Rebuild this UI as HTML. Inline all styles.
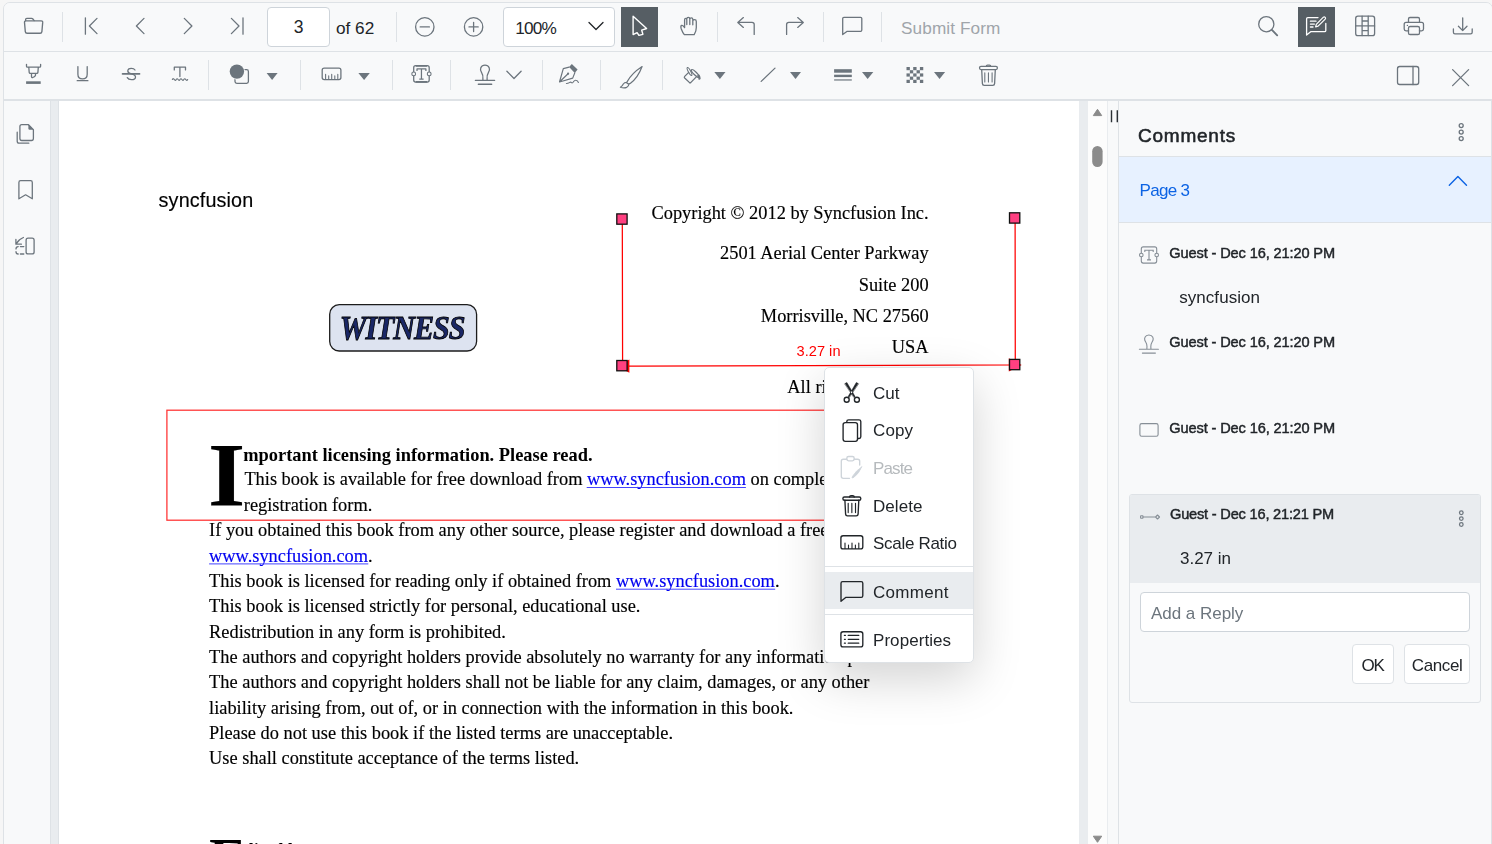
<!DOCTYPE html>
<html>
<head>
<meta charset="utf-8">
<title>PDF Viewer</title>
<style>
html,body{margin:0;padding:0;background:#f6f6f6;}
body{width:1492px;height:844px;overflow:hidden;position:relative;font-family:"Liberation Sans",sans-serif;color:#212529;}
*{box-sizing:border-box;}
.abs{position:absolute;}
#frame{position:absolute;left:3px;top:2px;width:1490px;height:860px;border:1px solid #dee2e6;border-radius:7px;background:#f8f9fa;overflow:hidden;}
/* coordinates inside #frame are offset by (4,3) from page: use #pg wrapper to keep page coords */
#pg{position:absolute;left:-4px;top:-3px;width:1492px;height:844px;}
.tb1{position:absolute;left:0;top:0;width:1500px;height:52px;background:#f8f9fa;border-bottom:1px solid #dee2e6;}
.tb2{position:absolute;left:0;top:52px;width:1500px;height:48px;background:#f8f9fa;}
.tbline{position:absolute;left:0;top:99px;width:1500px;height:2px;background:#dee2e6;}
.sep{position:absolute;width:1px;background:#dee2e6;}
.ic{position:absolute;overflow:visible;}
.ic *{vector-effect:none;}
.s{fill:none;stroke:#6c757d;stroke-width:1.3;stroke-linecap:round;stroke-linejoin:round;}
.f{fill:#6c757d;stroke:none;}
.t17{font-size:17.2px;line-height:20px;white-space:nowrap;}
.box{position:absolute;background:#fff;border:1px solid #ced4da;border-radius:4px;}
.active{position:absolute;background:#565e64;}
/* main */
#side{position:absolute;left:4px;top:101px;width:47px;height:760px;background:#f8f9fa;border-right:1px solid #dee2e6;}
#view{position:absolute;left:51px;top:101px;width:1037px;height:760px;background:#e9ecef;}
#page{position:absolute;left:58px;top:101px;width:1021px;height:760px;background:#fff;border-left:1px solid #dee2e6;}
#vscroll{position:absolute;left:1088px;top:101px;width:19px;height:760px;background:#fcfcfc;}
#split{position:absolute;left:1107px;top:101px;width:12px;height:760px;background:#f8f9fa;border-left:1px solid #e9ecef;border-right:1px solid #dee2e6;}
#cpanel{position:absolute;left:1119px;top:101px;width:373px;height:760px;background:#f8f9fa;border-right:1px solid #dee2e6;}
.serif{font-family:"Liberation Serif",serif;color:#000;white-space:nowrap;position:absolute;}
/* context menu */
#menu{position:absolute;left:824px;top:367px;width:150px;height:296px;background:#fff;border:1px solid #dee2e6;border-radius:5px;box-shadow:0 16px 48px rgba(0,0,0,.175);}
.ms{fill:none;stroke:#212529;stroke-width:1.3;stroke-linecap:round;stroke-linejoin:round;}
</style>
</head>
<body>
<div id="frame"><div id="pg">

<!-- ===== TOOLBAR 1 ===== -->
<div class="tb1"></div>
<div class="tb2"></div>
<div class="tbline"></div>
<div class="sep" style="left:62px;top:12px;height:30px"></div>
<div class="sep" style="left:396px;top:12px;height:30px"></div>
<div class="sep" style="left:717px;top:12px;height:30px"></div>
<div class="sep" style="left:823px;top:12px;height:30px"></div>
<div class="sep" style="left:881px;top:12px;height:30px"></div>
<div class="box" style="left:267px;top:7px;width:63px;height:40px"></div>
<div class="abs t17" id="pgnum" style="left:267px;top:17.3px;width:63px;text-align:center;font-size:17.5px">3</div>
<div class="abs t17" id="of62" style="left:336px;top:17.7px;">of 62</div>
<div class="box" style="left:503px;top:7px;width:112px;height:40px"></div>
<div class="abs t17" id="z100" style="left:515.2px;top:17.7px;letter-spacing:-0.75px;">100%</div>
<div class="active" style="left:621px;top:7px;width:37px;height:40px"></div>
<div class="active" style="left:1298px;top:7px;width:37px;height:40px"></div>
<div class="abs t17" id="submit" style="left:901px;top:18px;letter-spacing:0.1px;color:#a0a5aa">Submit Form</div>
<svg class="ic" style="left:0;top:0" width="1492" height="101" viewBox="0 0 1492 101">
<!-- folder -->
<path class="s" d="M25.6 20.6 V19.6 Q25.6 18.4 26.8 18.4 H31.6 Q32.4 18.4 32.9 19 L34.2 20.6"/>
<path class="s" style="stroke-width:1.35" d="M26 20.8 H41.2 Q42.8 20.8 42.7 22.4 L41.9 31.6 Q41.7 33.2 40.1 33.2 H27.1 Q25.5 33.2 25.3 31.6 L24.5 22.4 Q24.4 20.8 26 20.8 Z"/>
<!-- first -->
<path class="s" d="M85.4 17.8 V34.2 M97 18.4 L89.4 26 L97 33.6"/>
<!-- prev -->
<path class="s" d="M144 18.4 L136.4 26 L144 33.6"/>
<!-- next -->
<path class="s" d="M184.3 18.4 L191.9 26 L184.3 33.6"/>
<!-- last -->
<path class="s" d="M231.4 18.4 L239 26 L231.4 33.6 M243 17.8 V34.2"/>
<!-- zoom out -->
<circle class="s" cx="424.8" cy="26.9" r="9.2"/><path class="s" d="M420.2 26.9 H429.4"/>
<!-- zoom in -->
<circle class="s" cx="473.6" cy="26.9" r="9.2"/><path class="s" d="M469 26.9 H478.2 M473.6 22.3 V31.5"/>
<!-- zoom chevron -->
<path class="s" style="stroke:#212529" d="M589 22.5 L596 29.5 L603 22.5"/>
<!-- cursor -->
<path class="s" style="stroke:#fff;stroke-width:1.4;stroke-linejoin:round" d="M633.1 16.2 V34.6 L637.1 32.6 L638.9 35.4 L642.9 34.3 L641.7 30.2 L646.6 28.5 Z"/>
<!-- hand -->
<path class="s" d="M684.6 27.6 V19.8 Q684.6 18.4 685.7 18.4 Q686.8 18.4 686.8 19.8 V24.5 M686.8 19 Q686.8 17.3 688.3 17.3 Q689.8 17.3 689.8 19 V24.5 M689.8 19.3 Q689.8 17.8 691.3 17.8 Q692.8 17.8 692.8 19.3 V24.8 M692.8 21 Q692.8 19.6 694.5 19.6 Q696.3 19.6 696.3 21.4 V27.5 Q696.3 31.5 694.2 34.6 H684.3 Q682.6 32.6 681.3 29 Q680.3 26 681.6 25.4 Q683 24.9 684.6 27.6"/>
<!-- undo -->
<path class="s" d="M743.4 17.6 L737.8 22.4 L743.4 27.4 M737.8 22.4 H752 Q754.2 22.4 754.2 24.6 V34.4"/>
<!-- redo -->
<path class="s" d="M797.7 17.6 L803.3 22.4 L797.7 27.4 M803.3 22.4 H788.8 Q786.6 22.4 786.6 24.6 V34.4"/>
<!-- comment -->
<path class="s" d="M842.7 34.6 V18.6 Q842.7 17.4 843.9 17.4 H860.6 Q861.8 17.4 861.8 18.6 V30.1 Q861.8 31.3 860.6 31.3 H847.2 Z"/>
<!-- search -->
<circle class="s" cx="1266.3" cy="24.2" r="7.6"/><path class="s" style="stroke-width:1.9" d="M1271.9 29.9 L1277.2 35.3"/>
<!-- annot edit (white) -->
<g style="stroke:#fff" class="s"><path d="M1325.8 23.5 V30.4 Q1325.8 31.6 1324.6 31.6 H1311 L1306.6 35 V18.8 Q1306.6 17.6 1307.8 17.6 H1318"/>
<path d="M1310.4 21.2 H1316 M1310.4 24.1 H1314.4 M1310.4 27 H1313"/>
<path style="stroke-width:1.2" d="M1315.6 26.9 L1316.3 24.3 L1323.4 17.2 Q1324.3 16.4 1325.2 17.3 Q1326 18.2 1325.2 19.1 L1318.1 26.2 Z"/></g>
<!-- form designer grid -->
<rect class="s" x="1355.7" y="16.2" width="18.9" height="19.4" rx="2.2"/>
<path class="s" d="M1362.1 16.2 V35.6 M1368.2 16.2 V35.6 M1355.7 25.9 H1374.6 M1362.1 21 H1368.2 M1362.1 30.7 H1368.2"/>
<!-- print -->
<path class="s" d="M1408.5 22.4 V19 Q1408.5 17.5 1410 17.5 H1418 Q1419.5 17.5 1419.500 19 V22.4"/>
<path class="s" d="M1408.5 30.8 H1406 Q1404.200 30.8 1404.2 29 V24.3 Q1404.2 22.4 1406.100 22.4 H1421.7 Q1423.5 22.4 1423.5 24.3 V29 Q1423.5 30.8 1421.7 30.8 H1419.5"/>
<rect class="s" x="1408.5" y="26.5" width="11" height="8" rx="1.6"/>
<circle class="f" cx="1407.4" cy="25.4" r="0.7"/>
<!-- download -->
<path class="s" d="M1462.7 17.8 V30.6 M1458.400 26.300 L1462.7 30.6 L1467 26.300 M1453.4 28.900 V32.200 Q1453.4 33.800 1455 33.800 H1470.6 Q1472.200 33.800 1472.200 32.200 V28.900"/>
</svg>

<div class="sep" style="left:208px;top:60px;height:30px"></div>
<div class="sep" style="left:300px;top:60px;height:30px"></div>
<div class="sep" style="left:392px;top:60px;height:30px"></div>
<div class="sep" style="left:450px;top:60px;height:30px"></div>
<div class="sep" style="left:542px;top:60px;height:30px"></div>
<div class="sep" style="left:600px;top:60px;height:30px"></div>
<div class="sep" style="left:662px;top:60px;height:30px"></div>
<svg class="ic" style="left:0;top:0" width="1492" height="101" viewBox="0 0 1492 101">
<!-- highlight -->
<path class="s" d="M26.500 64.300 V66.200 Q26.500 67.100 27.400 67.100 H39.700 Q40.600 67.100 40.600 66.200 V64.300 M28.800 67.300 L29.200 72.400 Q29.300 73.400 30.300 73.400 H36.800 Q37.800 73.400 37.900 72.400 L38.300 67.300 M31.500 73.500 V76.600 Q31.600 77.800 32.800 77.500 Q34.500 77 35.400 75.700 L35.600 73.500"/>
<rect class="f" x="26.100" y="81.300" width="14.600" height="2.600"/>
<!-- underline -->
<path class="s" d="M77.900 66.600 V74.200 Q77.900 78.800 82.550 78.800 Q87.200 78.800 87.200 74.200 V66.600 M77.200 80.700 H87.900"/>
<!-- strikethrough -->
<path class="s" d="M135 70 Q134 68.300 131.300 68.300 Q127.800 68.300 127.800 71 Q127.800 73 131.400 73.900 Q135.500 74.800 135.500 77 Q135.500 79.700 131.500 79.700 Q128.300 79.700 127.300 77.600"/><path class="s" style="stroke-width:1.6" d="M122.500 73.900 H139.600"/>
<!-- squiggly -->
<path class="s" d="M174.300 69.900 V67.200 H185.500 V69.900 M179.900 67.200 V76.600"/>
<path class="s" style="stroke-width:1.2" d="M172.400 79.400 Q173.400 78 174.300 79.500 Q175.300 81.200 176.200 79.500 Q177.200 78 178.100 79.500 Q179.100 81.200 180 79.500 Q181 78 181.900 79.500 Q182.900 81.200 183.800 79.500 Q184.800 78 185.700 79.500 Q186.700 81.200 187.600 79.600"/>
<!-- shapes -->
<rect class="s" x="235" y="69.700" width="13.400" height="13.700" rx="1.800"/>
<circle cx="236.900" cy="71.600" r="8.100" fill="#f8f9fa"/>
<circle class="f" cx="236.900" cy="71.600" r="7.200"/>
<path class="f" d="M266.600 73.100 H277.600 L272.100 79.900 Z"/>
<!-- measure ruler -->
<rect class="s" x="322.200" y="68.200" width="18.700" height="11.400" rx="2"/>
<path class="s" style="stroke-width:1.1" d="M325.600 79.300 V74.200 M328.700 79.300 V75.900 M331.700 79.300 V74.200 M334.800 79.300 V75.900 M337.800 79.300 V74.200"/>
<path class="f" d="M358.400 73.100 H369.800 L364.100 79.900 Z"/>
<!-- free text -->
<rect class="s" x="413.700" y="65.700" width="15.500" height="16.400" rx="2"/>
<circle cx="413.700" cy="73.900" r="1.900" fill="#f8f9fa" class="s" style="fill:#f8f9fa;stroke-width:1.1"/>
<circle cx="429.200" cy="73.900" r="1.900" class="s" style="fill:#f8f9fa;stroke-width:1.100"/>
<path class="s" style="stroke-width:1.25;stroke-linecap:butt" d="M417 70.900 V68.900 H425.900 V70.900 M421.450 68.900 V79 M419.300 79.100 H423.600"/><path class="s" style="stroke-width:1.8;stroke-linecap:butt" d="M415.700 65.900 H427.200 M415.700 81.900 H427.200"/>
<!-- stamp -->
<path class="s" d="M482.900 80.400 L482.900 79 Q483.300 75 481.600 72.600 Q479.800 70 480.800 67.700 Q481.900 65.200 485 65.200 Q488.100 65.200 489.200 67.700 Q490.200 70 488.400 72.600 Q486.700 75 487.100 79 L487.100 80.400 M475.400 80.400 H494.600"/>
<path class="s" style="stroke-width:1.500" d="M478.400 84.200 H491.600"/>
<path class="s" d="M506.900 71.200 L514 78.500 L521.100 71.200"/>
<!-- signature pen -->
<path class="f" d="M571.800 63.900 L577.600 69.400 L574.800 72.900 L569.100 67.100 Z"/>
<path class="s" style="stroke-width:1.200" d="M569.100 67.100 L563.300 68.700 L559.500 82 L572.700 78.100 L574.800 72.900 M559.700 81.800 L567.800 74"/>
<circle class="f" cx="568.100" cy="73.700" r="1.100"/>
<path class="s" style="stroke-width:1.100" d="M566.400 83.500 Q568 83.500 569.400 82.600 Q570.800 81.700 571.500 82.700 Q572.300 83.500 573.500 81.700 Q574.800 80 576 80.300 Q577.500 80.600 578.400 82.500"/>
<!-- ink brush -->
<path class="s" style="stroke-width:1.200" d="M642.100 66.500 Q631.500 73.500 627.200 81.600 Q626.200 83.300 628 83.700 Q629.600 84 630.500 83.300 Q638 77.500 642.100 66.500 Z"/>
<path class="s" style="stroke-width:1.200" d="M626.700 82.300 Q624.300 82.300 623.300 84 Q622.300 86.200 620.400 87.200 Q624 88.500 626.600 87.400 Q628.800 86.300 628.900 83.900"/>
<!-- fill bucket -->
<path class="s" d="M688.700 72.400 L684.700 76.400 Q683.900 77.200 684.700 78 L689.300 82.400 Q690.100 83.100 690.900 82.400 L697.300 75.900"/>
<ellipse class="s" cx="695.300" cy="73.500" rx="5.300" ry="1.500" transform="rotate(45 695.300 73.500)"/>
<ellipse class="s" style="stroke-width:1.100" cx="689.500" cy="71.500" rx="1.200" ry="4.500" transform="rotate(-28 689.500 71.500)"/>
<path class="f" d="M697.500 75.400 Q698.300 77.800 698.500 79.500 Q700 80.200 700.700 78.500 Q700.600 76 699 74.300 Z"/>
<path class="f" d="M714.300 72.100 H725.500 L719.900 78.900 Z"/>
<!-- stroke line -->
<path class="s" d="M761.200 81.400 L775 68.100"/>
<path class="f" d="M790 72.100 H801 L795.500 78.900 Z"/>
<!-- thickness -->
<rect class="f" x="834.100" y="69.200" width="17.700" height="3.500"/>
<rect class="f" x="834.100" y="74.700" width="17.700" height="2.400"/>
<rect class="f" x="834.100" y="79.200" width="17.700" height="1.500" opacity=".8"/>
<path class="f" d="M862 72.100 H873.300 L867.650 78.900 Z"/>
<!-- opacity checker -->
<g class="f">
<rect x="906.500" y="67" width="3.350" height="3.200"/><rect x="913.200" y="67" width="3.350" height="3.200"/><rect x="919.900" y="67" width="3.350" height="3.200"/>
<rect x="909.850" y="70.200" width="3.350" height="3.200"/><rect x="916.550" y="70.200" width="3.350" height="3.200"/>
<rect x="906.500" y="73.400" width="3.350" height="3.200"/><rect x="913.200" y="73.400" width="3.350" height="3.200"/><rect x="919.900" y="73.400" width="3.350" height="3.200"/>
<rect x="909.850" y="76.600" width="3.350" height="3.200"/><rect x="916.550" y="76.600" width="3.350" height="3.200"/>
<rect x="906.500" y="79.800" width="3.350" height="3.200"/><rect x="913.200" y="79.800" width="3.350" height="3.200"/><rect x="919.900" y="79.800" width="3.350" height="3.200"/>
</g>
<path class="f" d="M934 72.100 H945.100 L939.550 78.900 Z"/>
<!-- trash -->
<rect class="s" x="979.500" y="66.400" width="17.900" height="3.200" rx="1.500"/>
<path class="s" d="M986.300 66.400 Q986.300 65.200 987.500 65.200 H989.500 Q990.700 65.200 990.700 66.400"/>
<path class="s" d="M981.700 69.600 L982.400 83.600 Q982.500 85.300 984.200 85.300 H992.800 Q994.500 85.300 994.600 83.600 L995.300 69.600"/>
<path class="s" style="stroke-width:1.100" d="M984.800 72.900 V82 M988.450 72.900 V82 M992.100 72.900 V82"/>
<!-- panel toggle -->
<rect class="s" x="1397.500" y="66.500" width="21.200" height="18" rx="2.200"/>
<path class="s" d="M1413 66.500 V84.500"/>
<!-- close -->
<path class="s" d="M1452.600 69.600 L1468.600 85.600 M1468.600 69.600 L1452.600 85.600"/>
</svg>


<!-- ===== MAIN ===== -->
<div id="side"></div>
<svg class="ic" style="left:0;top:0" width="64" height="300" viewBox="0 0 64 300">
<!-- thumbnails -->
<path class="s" d="M28.500 124.700 H21.800 Q19.900 124.700 19.900 126.600 V138.600 Q19.900 140.500 21.800 140.500 H31.500 Q33.400 140.500 33.400 138.600 V129.600 Z"/>
<path class="f" d="M28.400 124.600 L33.500 129.700 H29.600 Q28.400 129.700 28.400 128.500 Z"/>
<path class="s" d="M17.200 132.200 V141.300 Q17.200 143.200 19.100 143.200 H28.800"/>
<!-- bookmark -->
<path class="s" d="M18.900 198.800 V182.400 Q18.900 180.700 20.600 180.700 H30.600 Q32.300 180.700 32.300 182.400 V198.800 L25.600 194.800 Z"/>
<!-- organize -->
<rect class="s" x="26.100" y="238.200" width="8" height="15.700" rx="2"/>
<path class="s" d="M23.800 246.600 H20.400 M18.200 246.600 Q16 246.600 16 248.900 M16 251.700 Q16 254 18.200 254 M20.400 254 H23.800"/>
<path class="s" d="M23.400 237.500 Q18.600 239.400 16.500 243.500 M15.900 239.300 V244.200 H21.400"/>
</svg>

<div id="view"></div>
<div id="page"></div>
<svg class="ic" style="left:0;top:0;will-change:transform" width="1492" height="844" viewBox="0 0 1492 844">
<g font-family="Liberation Serif" font-size="18.37" fill="#000" stroke="#000" stroke-width="0.15">
<!-- free text -->
<text x="158.6" y="206.9" font-family="Liberation Sans" font-size="19.75" textLength="94.6" fill="#000" stroke-width="0.15">syncfusion</text>
<!-- stamp -->
<rect x="329.7" y="304.7" width="146.9" height="46.3" rx="9.5" fill="#dde3f0" stroke="#1c1c1c" stroke-width="1.3"/>
<text id="wit" transform="translate(339.8 338.9) scale(0.9 1)" x="0" y="0" font-weight="bold" font-style="italic" font-size="33.4" textLength="139.5" lengthAdjust="spacing" fill="#1a2766" stroke="#000" stroke-width="0.85">WITNESS</text>
<!-- copyright block -->
<g text-anchor="end">
<text x="928.6" y="218.7">Copyright © 2012 by Syncfusion Inc.</text>
<text x="928.6" y="259.3">2501 Aerial Center Parkway</text>
<text x="928.6" y="290.7">Suite 200</text>
<text x="928.6" y="321.9">Morrisville, NC 27560</text>
<text x="928.6" y="352.8">USA</text>
<text x="928.6" y="393.2">All rights reserved.</text>
</g>
<!-- red rectangle annotation -->
<rect x="166.900" y="410.200" width="762" height="110" fill="none" stroke="#ff3030" stroke-width="1.250"/>
<!-- drop cap -->
<text id="dropI" transform="translate(208 506) scale(1.180 1.120)" x="0" y="0" font-weight="bold" font-size="81">I</text>
<text x="243.200" y="461.300" font-weight="bold" font-size="18.42" stroke="none">mportant licensing information. Please read.</text>
<text x="244.400" y="485.300">This book is available for free download from <tspan fill="#0000f0" stroke="#0000f0">www.syncfusion.com</tspan> on completion of a</text>
<text x="243.800" y="511">registration form.</text>
<text x="209.100" y="536.400">If you obtained this book from any other source, please register and download a free copy from</text>
<text x="209.100" y="561.700"><tspan fill="#0000f0" stroke="#0000f0">www.syncfusion.com</tspan>.</text>
<text x="209.100" y="587">This book is licensed for reading only if obtained from <tspan fill="#0000f0" stroke="#0000f0">www.syncfusion.com</tspan>.</text>
<text x="209.100" y="612.400">This book is licensed strictly for personal, educational use.</text>
<text x="209.100" y="637.700">Redistribution in any form is prohibited.</text>
<text x="209.100" y="663">The authors and copyright holders provide absolutely no warranty for any information provided.</text>
<text x="209.100" y="688.400">The authors and copyright holders shall not be liable for any claim, damages, or any other</text>
<text x="209.100" y="713.700">liability arising from, out of, or in connection with the information in this book.</text>
<text x="209.100" y="739">Please do not use this book if the listed terms are unacceptable.</text>
<text x="209.100" y="764.400">Use shall constitute acceptance of the terms listed.</text>
<text x="209.2" y="875.6" font-weight="bold" font-size="55">E</text>
<text x="243.600" y="856.300" font-weight="bold" stroke="none">dited by</text>
<g stroke="#3a3aff" stroke-width="0.95" fill="none">
<path d="M586.700 487.500 H745.900 M209.100 563.900 H368.300 M616 589.200 H775.200"/>
</g>
<!-- measurement annotation -->
<g stroke="#ff0000" stroke-width="1.250" fill="none">
<path d="M622.600 366.100 L1015.200 364.900 M622.600 366.100 L622.300 219 M1015.300 364.900 L1015.100 218"/>
</g>
<path d="M616.500 366.100 L629.400 359.500 V372.700 Z" fill="#ff0000" stroke="none"/>
<path d="M1021.700 365 L1008.800 358.300 V371.600 Z" fill="#ff0000" stroke="none"/>
<text x="796.500" y="355.900" font-family="Liberation Sans" font-size="14.600" fill="#ff0000" stroke="none" textLength="44">3.27 in</text>
<g fill="#ff4081" stroke="#111" stroke-width="1.300">
<rect x="616.800" y="213.900" width="10.300" height="10.300"/>
<rect x="616.800" y="360.500" width="10.300" height="10.300"/>
<rect x="1009.500" y="212.800" width="10.300" height="10.300"/>
<rect x="1009.500" y="359.400" width="10.300" height="10.300"/>
</g>
</g>
</svg>

<div id="vscroll"></div>

<div id="split"></div>
<div id="cpanel"></div>
<svg class="ic" style="left:0;top:0" width="1492" height="844" viewBox="0 0 1492 844">
<path d="M1093.300 115.600 L1097.500 109.300 L1101.700 115.600 Z" fill="#8b8b8b" stroke="#8b8b8b" stroke-width="1" stroke-linejoin="round"/>
<rect x="1092.200" y="146" width="10.400" height="21" rx="5.200" fill="#8b8b8b"/>
<path d="M1093.300 836.200 L1097.500 842.300 L1101.700 836.200 Z" fill="#8b8b8b" stroke="#8b8b8b" stroke-width="1" stroke-linejoin="round"/>
<path d="M1111.500 110.200 V122.200 M1117.300 110.200 V122.200" stroke="#2b3035" stroke-width="1.400" fill="none"/>
</svg>

<div class="abs" style="left:1119px;top:156px;width:372px;height:1px;background:#dee2e6"></div>
<div class="abs" style="left:1119px;top:157px;width:372px;height:65px;background:#e7f1ff"></div>
<div class="abs" style="left:1119px;top:222px;width:372px;height:1px;background:#dee2e6"></div>
<div class="abs" style="left:1129px;top:494px;width:352px;height:209px;border:1px solid #dee2e6;border-radius:3px;background:#f8f9fa"></div>
<div class="abs" style="left:1130px;top:495px;width:350px;height:88px;background:#e9ecef;border-radius:2px 2px 0 0"></div>
<div class="box" style="left:1140px;top:592px;width:330px;height:40px;border-color:#ced4da"></div>
<div class="box" style="left:1352px;top:644px;width:42px;height:40px;border-color:#dee2e6"></div>
<div class="box" style="left:1404px;top:644px;width:66px;height:40px;border-color:#dee2e6"></div>
<svg class="ic" style="left:0;top:0" width="1492" height="844" viewBox="0 0 1492 844" font-family="Liberation Sans" fill="#212529">
<text x="1138" y="142" font-size="19" textLength="97.200" stroke="#212529" stroke-width="0.55">Comments</text>
<text x="1139.600" y="195.500" font-size="17" fill="#0c63e4" textLength="50.300">Page 3</text>
<path d="M1449.300 185.200 L1457.900 176.600 L1466.500 185.200" fill="none" stroke="#0c63e4" stroke-width="1.400" stroke-linecap="round" stroke-linejoin="round"/>
<g fill="none" stroke="#6c757d" stroke-width="1.300"><circle cx="1461.200" cy="125.600" r="2"/><circle cx="1461.200" cy="132.100" r="2"/><circle cx="1461.200" cy="138.600" r="2"/></g>
<g fill="none" stroke="#6c757d" stroke-width="1.250"><circle cx="1461.300" cy="512.700" r="1.800"/><circle cx="1461.300" cy="518.600" r="1.800"/><circle cx="1461.300" cy="524.500" r="1.800"/></g>
<g font-size="14.600" stroke="#212529" stroke-width="0.45">
<text x="1169.300" y="257.800" textLength="165.800">Guest - Dec 16, 21:20 PM</text>
<text x="1169.300" y="346.500" textLength="165.800">Guest - Dec 16, 21:20 PM</text>
<text x="1169.300" y="432.800" textLength="165.800">Guest - Dec 16, 21:20 PM</text>
<text x="1170" y="518.800" textLength="164.200">Guest - Dec 16, 21:21 PM</text>
</g>
<text x="1179.200" y="302.700" font-size="17" textLength="80.800">syncfusion</text>
<text x="1180" y="563.900" font-size="17" textLength="51">3.27 in</text>
<text x="1151" y="618.800" font-size="17" fill="#6c757d" textLength="92.300">Add a Reply</text>
<text x="1361.500" y="671.100" font-size="17" textLength="23.400">OK</text>
<text x="1411.800" y="671.100" font-size="17" textLength="51">Cancel</text>
<!-- comment icons -->
<g fill="none" stroke="#868e96" stroke-width="1.100" stroke-linecap="round" stroke-linejoin="round">
<rect x="1141.300" y="246.900" width="15.400" height="16.200" rx="2"/>
<circle cx="1141.300" cy="255" r="1.800" fill="#f8f9fa"/><circle cx="1156.700" cy="255" r="1.800" fill="#f8f9fa"/>
<path transform="translate(0 3.4)" d="M1146.900 345.800 L1146.900 344.500 Q1147.300 341 1145.700 338.600 Q1144 336 1145 333.900 Q1146 331.600 1148.900 331.600 Q1151.800 331.600 1152.800 333.900 Q1153.800 336 1152.100 338.600 Q1150.500 341 1150.900 344.500 L1150.900 345.800 M1139.400 345.900 H1158.400 M1142.400 349.700 H1155.400"/>
<rect x="1139.900" y="423.600" width="18.200" height="12.600" rx="1.800"/>
<rect x="1140.600" y="515.800" width="2.400" height="2.400" rx=".4"/>
<path d="M1143 517 H1155.600 M1155.600 517 L1157.500 515 L1159.500 517 L1157.500 519 Z"/>
</g>
<path fill="none" stroke="#868e96" stroke-width="1.100" d="M1144.800 252 V250.300 H1153.200 V252 M1149 250.300 V259.800 M1147 259.900 H1151"/>
</svg>

<div id="menu"></div>
<div class="abs" style="left:825px;top:566px;width:148px;height:1px;background:#dee2e6"></div>
<div class="abs" style="left:825px;top:572px;width:148px;height:37px;background:#e9ecef"></div>
<div class="abs" style="left:825px;top:614px;width:148px;height:1px;background:#dee2e6"></div>
<svg class="ic" style="left:0;top:0" width="1492" height="844" viewBox="0 0 1492 844" font-family="Liberation Sans" font-size="17" fill="#212529">
<text x="873" y="398.500" textLength="26.500">Cut</text>
<text x="873" y="436.400" textLength="40">Copy</text>
<text x="873" y="473.500" textLength="40" fill="#b6babd">Paste</text>
<text x="873" y="511.500" textLength="49.500">Delete</text>
<text x="873" y="548.500" textLength="84">Scale Ratio</text>
<text x="873" y="597.700" textLength="75.600">Comment</text>
<text x="873" y="645.500" textLength="78">Properties</text>
</svg>
<svg class="ic" style="left:0;top:0" width="1492" height="844" viewBox="0 0 1492 844">
<g class="ms" style="stroke-width:1.350">
<!-- cut -->
<path fill="#212529" stroke-width=".5" d="M844.900 383.600 L846.900 382.500 L855.100 396.600 L854.200 397.400 Z M858.300 383.600 L856.300 382.500 L848.100 396.600 L849 397.400 Z"/>
<circle cx="846.700" cy="399.700" r="2.500"/><circle cx="856.900" cy="399.700" r="2.500"/>
<!-- copy -->
<path d="M846.800 422 V421.600 Q846.800 419.800 848.600 419.800 H859 Q860.800 419.800 860.800 421.600 V436.700 Q860.800 438.500 859 438.500 H858"/>
<rect x="843.100" y="422.600" width="14.400" height="18.700" rx="2.200"/>
<!-- paste (disabled) -->
<g stroke="#ced4da">
<path d="M846.800 459.200 H843.300 Q841.300 459.200 841.300 461.200 V476.300 Q841.300 478.300 843.300 478.300 H849.500 M854.200 459.200 H857.700 Q859.700 459.200 859.700 461.200 V465"/>
<rect x="846.800" y="456.500" width="7.400" height="4.400" rx="1.800"/>
<path d="M861.700 466.900 Q856 470.500 852.600 476.200 L852 478 L853.800 477.400 Q859 473.500 861.700 466.900 Z" fill="#ced4da" stroke-width=".8"/>
</g>
<!-- delete -->
<rect x="842.900" y="497" width="17.900" height="3.200" rx="1.500"/>
<path d="M849.600 497 Q849.600 495.600 851 495.600 H852.800 Q854.200 495.600 854.200 497"/>
<path d="M844.900 500.200 L845.600 514.100 Q845.700 515.800 847.400 515.800 H856.300 Q858 515.800 858.100 514.100 L858.800 500.200"/>
<path stroke-width="1.150" d="M848.200 503.300 V512.600 M851.850 503.300 V512.600 M855.500 503.300 V512.600"/>
<!-- scale ratio -->
<rect x="840.900" y="535.700" width="21.900" height="13.200" rx="2.200"/>
<path stroke-width="1.100" d="M845 548.500 V543 M848.500 548.500 V545 M852 548.500 V543 M855.400 548.500 V545 M858.800 548.500 V543"/>
<!-- comment -->
<path d="M841 601.300 V583.200 Q841 581.600 842.600 581.600 H861.200 Q862.800 581.600 862.800 583.200 V595.700 Q862.800 597.300 861.200 597.300 H846 Z"/>
<!-- properties -->
<rect x="840.900" y="631.700" width="21.900" height="15.200" rx="2.200"/>
<path stroke-width="1.200" d="M848.200 635.400 H858.800 M848.200 639.300 H858.800 M848.200 643.200 H858.800 M844.400 635.400 H845.400 M844.400 639.300 H845.400 M844.400 643.200 H845.400"/>
</g>
</svg>



</div></div>
</body>
</html>
